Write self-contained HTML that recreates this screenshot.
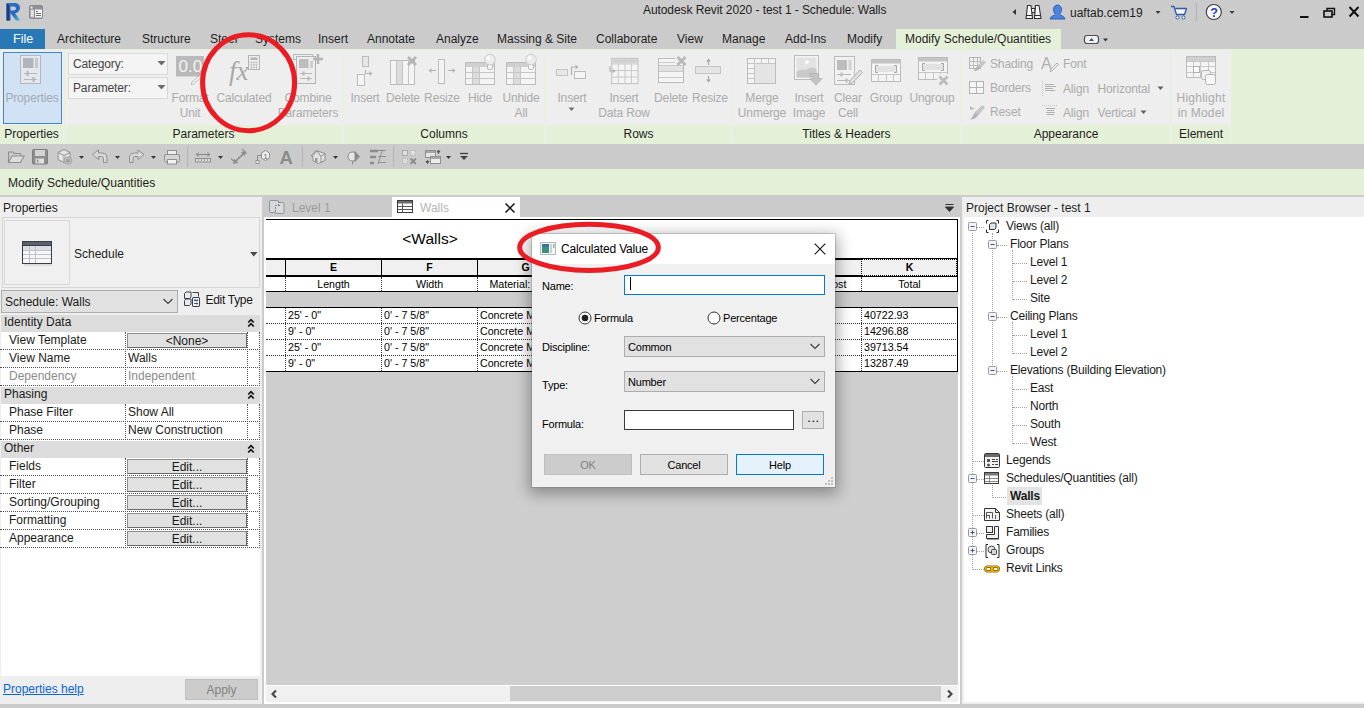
<!DOCTYPE html>
<html>
<head>
<meta charset="utf-8">
<title>Autodesk Revit 2020 - test 1 - Schedule: Walls</title>
<style>
html,body{margin:0;padding:0;}
body{width:1364px;height:708px;overflow:hidden;position:relative;background:#cbcbcb;font-family:"Liberation Sans",sans-serif;font-size:12px;color:#1a1a1a;}
.a{position:absolute;}
.t{position:absolute;white-space:nowrap;line-height:16px;height:16px;}
.c{text-align:center;}
/* title + menu */
#menubar .t{font-size:12px;top:31px;color:#1e1e1e;}
/* ribbon */
#ribbon{left:0;top:47px;width:1364px;height:97px;}
.panel{position:absolute;top:3px;height:93px;background:#eeeeee;}
.plabel{position:absolute;top:78px;height:18px;background:#e5f0d8;font-size:12px;line-height:18px;text-align:center;color:#1e1e1e;}
.rl{position:absolute;white-space:nowrap;letter-spacing:-0.150px;font-size:12px;line-height:16px;color:#ababab;text-align:center;transform:translateX(-50%);}
.rs{position:absolute;white-space:nowrap;letter-spacing:-0.150px;font-size:12px;line-height:15px;color:#ababab;}
/* property palette */
.prow{position:absolute;left:0;width:260px;height:18px;font-size:12px;line-height:17px;}
.phead{position:absolute;left:1px;width:259px;height:17px;background:#dcdcdc;font-size:12px;line-height:15px;}
.pbtn{width:120px;height:15px;background:#e1e1e1;border:1px solid #8e8e8e;border-bottom-color:#6a6a6a;border-right-color:#6a6a6a;box-sizing:border-box;}
/* tree */
.tr{position:absolute;white-space:nowrap;letter-spacing:-0.200px;font-size:12px;line-height:18px;height:18px;color:#1a1a1a;}
/* schedule */
.sc{position:absolute;white-space:nowrap;font-size:10.670px;line-height:14px;color:#000;}
/* dialog */
.dl{position:absolute;white-space:nowrap;letter-spacing:-0.200px;font-size:11px;line-height:14px;color:#000;}
</style>
</head>
<body>

<!-- ===== TITLE BAR ===== -->
<div id="titlebar" class="a" style="left:0;top:0;width:1364px;height:29px;background:#cbcbcb;"></div>
<div class="t" style="left:643px;top:2px;font-size:12px;color:#1e1e1e;letter-spacing:-0.080px;">Autodesk Revit 2020 - test 1 - Schedule: Walls</div>
<div class="t" style="left:1070px;top:5px;font-size:12px;color:#1e1e1e;">uaftab.cem19</div>

<!-- titlebar icons -->
<svg class="a" style="left:0;top:0;" width="1364" height="29" viewBox="0 0 1364 29">
  <defs>
    <linearGradient id="rg" x1="0" y1="0" x2="1" y2="1"><stop offset="0" stop-color="#2a78d0"/><stop offset="0.600" stop-color="#2468c0"/><stop offset="1" stop-color="#5cc4ec"/></linearGradient>
  </defs>
  <!-- R logo -->
  <path d="M6.500 3h7.500c4 0 6 2 6 5s-2 4.800 -5 5.200l5.500 7.300h-4.500l-5.500 -7.500v7.500h-4z M10.500 6.500v4h3c1.500 0 2.500 -0.700 2.500 -2s-1 -2 -2.500 -2z" fill="url(#rg)" fill-rule="evenodd"/>
  <path d="M6.500 3.500l3 2v15h-3z" fill="#1e3c7a"/>
  <!-- qat toggle -->
  <rect x="29.500" y="5.500" width="13" height="13" rx="1.200" fill="#8e9096" stroke="#85878c"/>
  <rect x="30.500" y="6.500" width="2" height="2" fill="#e6f0fa"/>
  <rect x="30.500" y="9.500" width="3.500" height="8" fill="#cfd0d4"/>
  <rect x="35" y="9.500" width="7" height="8" fill="#f2f2f2"/>
  <path d="M31 11.500h2M31 13.500h2M31 15.500h2" stroke="#f4f4f4"/>
  <path d="M36 11.500h2M36 13.500h5M36 15.500h5" stroke="#707070"/>
  <!-- right side -->
  <path d="M1016 9l-3.500 3l3.500 3z" fill="#333"/>
  <g stroke="#2e2e2e" stroke-width="1.100" fill="#f8f8f8" stroke-linejoin="round">
    <rect x="1031" y="8.500" width="4" height="4"/>
    <path d="M1027.500 5.500h3.500l1.500 13h-6.500z"/>
    <path d="M1035.500 5.500h3.500l2 13h-6.500z"/>
    <path d="M1026 15.500h6.500M1034.500 15.500h6.500"/>
  </g>
  <path d="M1057.500 5c2.600 0 4 2 4 4.500c0 2 -0.800 3.500 -2 4.500c0.500 1.500 5 2 5.500 5h-15c0.500 -3 5 -3.500 5.500 -5c-1.200 -1 -2 -2.500 -2 -4.500c0 -2.500 1.400 -4.500 4 -4.500z" fill="#4a86de" stroke="#2a56b0" stroke-width="0.900"/>
  <path d="M1155.5 11.0h5l-2.500 3z" fill="#3a3a3a"/>
  <path d="M1171 6.500h3l2.500 8h8l2 -6h-11" fill="#f4f6fa" stroke="#2c5aa8" stroke-width="1.300" stroke-linejoin="round"/>
  <circle cx="1177.500" cy="17.500" r="1.600" fill="#fff" stroke="#2c5aa8"/>
  <circle cx="1183.500" cy="17.500" r="1.600" fill="#fff" stroke="#2c5aa8"/>
  <path d="M1196.500 3v18" stroke="#b2b2b2"/>
  <circle cx="1213.800" cy="12" r="7.500" fill="#fbfbfb" stroke="#3a3a3a" stroke-width="1.100"/>
  <text x="1210.300" y="16.500" font-family="Liberation Sans" font-weight="bold" font-size="12.500" fill="#2040c0">?</text>
  <path d="M1229.5 11.0h5l-2.500 3z" fill="#3a3a3a"/>
  <path d="M1300 17h8.500" stroke="#111" stroke-width="2"/>
  <path d="M1327 11v-2.500h7.500v6h-2.500" fill="none" stroke="#111" stroke-width="1.400"/>
  <rect x="1324" y="11" width="8" height="6" fill="none" stroke="#111" stroke-width="1.600"/>
  <path d="M1349.500 7l9 9.500M1358.500 7l-9 9.500" stroke="#111" stroke-width="2"/>
  <!-- ribbon minimize toggle in tab row -->
</svg>
<svg class="a" style="left:1082px;top:32px;z-index:2;" width="30" height="14" viewBox="0 0 30 14">
  <rect x="2.500" y="3.500" width="14" height="8" rx="2.500" fill="#eef0f4" stroke="#4a4e58" stroke-width="1.200"/>
  <path d="M7 9l2.500 -3l2.500 3z" fill="#4a4e58"/>
  <path d="M21 6.500h5l-2.500 3z" fill="#333"/>
</svg>

<!-- ===== MENU BAR ===== -->
<div id="menubar" class="a" style="left:0;top:29px;width:1364px;height:20px;">
  <div class="a" style="left:0;top:0;width:45px;height:20px;background:#2878b6;"></div>
  <div class="t" style="left:13px;top:2px;color:#fff;font-size:12.500px;">File</div>
  <div class="a" style="left:896px;top:0;width:165px;height:20px;background:#e5f0d8;"></div>
  <div class="t" style="left:57px;top:2px;">Architecture</div>
  <div class="t" style="left:142px;top:2px;">Structure</div>
  <div class="t" style="left:210px;top:2px;">Steel</div>
  <div class="t" style="left:255px;top:2px;">Systems</div>
  <div class="t" style="left:318px;top:2px;">Insert</div>
  <div class="t" style="left:367px;top:2px;">Annotate</div>
  <div class="t" style="left:436px;top:2px;">Analyze</div>
  <div class="t" style="left:497px;top:2px;">Massing &amp; Site</div>
  <div class="t" style="left:596px;top:2px;">Collaborate</div>
  <div class="t" style="left:677px;top:2px;">View</div>
  <div class="t" style="left:722px;top:2px;">Manage</div>
  <div class="t" style="left:785px;top:2px;">Add-Ins</div>
  <div class="t" style="left:847px;top:2px;">Modify</div>
  <div class="t" style="left:905px;top:2px;">Modify Schedule/Quantities</div>
</div>

<!-- ===== RIBBON ===== -->
<div id="ribbon" class="a">
  <div class="a" style="left:0;top:2px;width:1364px;height:95px;background:#e5f0d8;"></div>
  <div class="panel" style="left:0px;width:64px;"></div>
  <div class="panel" style="left:65px;width:277px;"></div>
  <div class="panel" style="left:343px;width:202px;"></div>
  <div class="panel" style="left:546px;width:185px;"></div>
  <div class="panel" style="left:732px;width:229px;"></div>
  <div class="panel" style="left:962px;width:208px;"></div>
  <div class="panel" style="left:1171px;width:60px;"></div>

  <!-- Properties button -->
  <div class="a" style="left:3px;top:5px;width:59px;height:72px;background:#d0e2f4;border:1px solid #3f88d6;box-sizing:border-box;"></div>
  <svg class="a" style="left:19px;top:7px;" width="23" height="32" viewBox="0 0 23 32">
    <rect x="1.5" y="1.5" width="20" height="28" fill="#e4e8ee" stroke="#b4b8be"/>
    <rect x="4" y="4" width="10.5" height="10" fill="#b0b5bc"/>
    <rect x="16" y="4" width="3" height="10" fill="#c4c8ce"/>
    <path d="M5 19.5h13M5 25.500h13" stroke="#b0b5bc" stroke-width="1"/>
    <path d="M8.500 17v5M14.500 23v5" stroke="#b0b5bc" stroke-width="2"/>
  </svg>
  <div class="rl" style="left:32px;top:43px;color:#a6abb3;">Properties</div>

  <!-- combos -->
  <div class="a" style="left:68px;top:6px;width:100px;height:22px;background:#f4f4f4;border:1px solid #dadada;box-sizing:border-box;"></div>
  <div class="a" style="left:68px;top:30px;width:100px;height:22px;background:#f4f4f4;border:1px solid #dadada;box-sizing:border-box;"></div>
  <div class="rs" style="left:73px;top:10px;color:#454545;">Category:</div>
  <div class="rs" style="left:73px;top:34px;color:#454545;">Parameter:</div>
  <svg class="a" style="left:157px;top:14px;" width="9" height="5"><path d="M0.500 0h8l-4 4.500z" fill="#6a6a6a"/></svg>
  <svg class="a" style="left:157px;top:38px;" width="9" height="5"><path d="M0.500 0h8l-4 4.500z" fill="#6a6a6a"/></svg>

  <!-- Format Unit -->
  <svg class="a" style="left:175px;top:8px;" width="32" height="32" viewBox="0 0 32 32">
    <rect x="1" y="1" width="28" height="20.500" fill="#b9b9b9"/>
    <text x="3.500" y="17" font-family="Liberation Sans" font-size="17" fill="#f2f2f2">0.0</text>
    <path d="M29 17 L17 27 L16 29.500 L18.500 29 L30.500 19z" fill="#f4f4f4" stroke="#bdbdbd" stroke-width="1"/>
  </svg>
  <div class="rl" style="left:190px;top:43px;">Format</div>
  <div class="rl" style="left:190px;top:58px;">Unit</div>

  <!-- Calculated -->
  <svg class="a" style="left:228px;top:6px;" width="34" height="34" viewBox="0 0 34 34">
    <text x="1" y="27" font-family="Liberation Serif" font-style="italic" font-size="27" fill="#a9a9a9">fx</text>
    <rect x="20.500" y="2.500" width="11" height="14" fill="#ededed" stroke="#b4b4b4"/>
    <rect x="22.500" y="4.500" width="7" height="2.500" fill="#b4b4b4"/>
    <path d="M22.500 9.500h7M22.500 12h7M22.500 14.500h7" stroke="#b4b4b4" stroke-width="1.300" stroke-dasharray="1.600 1"/>
  </svg>
  <div class="rl" style="left:244px;top:43px;">Calculated</div>

  <!-- Combine Parameters -->
  <svg class="a" style="left:292px;top:6px;" width="34" height="34" viewBox="0 0 34 34">
    <rect x="1.500" y="1.500" width="19" height="5" fill="#eee" stroke="#b9b9b9"/>
    <rect x="4.500" y="3.500" width="19" height="27" fill="#ededed" stroke="#b4b4b4"/>
    <rect x="7" y="6" width="9.500" height="9" fill="#bdbdbd"/>
    <rect x="18" y="8" width="3" height="7" fill="#cfcfcf"/>
    <path d="M8 20.500h12M8 25.500h12" stroke="#b9b9b9"/>
    <path d="M11.500 18.500v4M16.500 23.500v4" stroke="#b9b9b9" stroke-width="2"/>
    <path d="M26 1v10M21 6h10" stroke="#b4b4b4" stroke-width="2.400"/>
  </svg>
  <div class="rl" style="left:308px;top:43px;">Combine</div>
  <div class="rl" style="left:308px;top:58px;">Parameters</div>

  <!-- Columns -->
  <svg class="a" style="left:354px;top:8px;" width="24" height="32" viewBox="0 0 24 32">
    <rect x="8.500" y="1.500" width="6" height="10" fill="#e6e6e6" stroke="#bcbcbc"/>
    <rect x="3.500" y="19.500" width="7" height="11" fill="#f4f4f4" stroke="#bcbcbc"/>
    <path d="M11.500 15v3.500h5" stroke="#b4b4b4" stroke-width="1.200" fill="none"/>
    <path d="M15.500 16l3 2.500l-3 2.500z" fill="#b4b4b4"/>
  </svg>
  <div class="rl" style="left:365px;top:43px;">Insert</div>
  <svg class="a" style="left:388px;top:8px;" width="32" height="32" viewBox="0 0 32 32">
    <rect x="2.500" y="5.500" width="24" height="24" fill="#f4f4f4" stroke="#bcbcbc"/>
    <rect x="8" y="6" width="6" height="23" fill="#dcdcdc"/>
    <path d="M8.500 6v23M14.500 6v23M20.500 6v23" stroke="#c4c4c4"/>
    <path d="M20 2l8 8M28 2l-8 8" stroke="#b4b4b4" stroke-width="2.600"/>
  </svg>
  <div class="rl" style="left:403px;top:43px;">Delete</div>
  <svg class="a" style="left:427px;top:6px;" width="32" height="32" viewBox="0 0 32 32">
    <rect x="11.500" y="6.500" width="6" height="24" fill="#f4f4f4" stroke="#bcbcbc"/>
    <path d="M2 17.500h7M21 17.500h7" stroke="#b4b4b4" stroke-width="1.200"/>
    <path d="M4.500 15l-3 2.500l3 2.500zM25.500 15l3 2.500l-3 2.500z" fill="#b4b4b4"/>
  </svg>
  <div class="rl" style="left:442px;top:43px;">Resize</div>
  <svg class="a" style="left:464px;top:5px;" width="34" height="34" viewBox="0 0 34 34">
    <rect x="1.500" y="10.500" width="29" height="22" fill="#f4f4f4" stroke="#bcbcbc"/>
    <rect x="2" y="11" width="28" height="4" fill="#cfcfcf"/>
    <rect x="8" y="15" width="7" height="17" fill="#dcdcdc"/>
    <path d="M8.500 15v17M15.500 15v17M2 20.500h28M2 26.500h28" stroke="#c6c6c6"/>
    <rect x="23.500" y="11.500" width="5" height="6" rx="1.500" fill="#f4f4f4" stroke="#bcbcbc"/>
    <circle cx="26" cy="7.500" r="5.300" fill="#ececec" stroke="#cdcdcd"/>
    <circle cx="24.500" cy="6" r="2" fill="#fafafa"/>
  </svg>
  <div class="rl" style="left:480px;top:43px;">Hide</div>
  <svg class="a" style="left:505px;top:5px;" width="34" height="34" viewBox="0 0 34 34">
    <rect x="1.500" y="10.500" width="29" height="22" fill="#f4f4f4" stroke="#bcbcbc"/>
    <rect x="2" y="11" width="28" height="4" fill="#cfcfcf"/>
    <rect x="8" y="15" width="7" height="17" fill="#dcdcdc"/>
    <path d="M8.500 15v17M15.500 15v17M2 20.500h28M2 26.500h28" stroke="#c6c6c6"/>
    <rect x="23.500" y="11.500" width="5" height="6" rx="1.500" fill="#f4f4f4" stroke="#bcbcbc"/>
    <circle cx="26" cy="7.500" r="5.300" fill="#ececec" stroke="#cdcdcd"/>
    <circle cx="24.500" cy="6" r="2" fill="#fafafa"/>
  </svg>
  <div class="rl" style="left:521px;top:43px;">Unhide</div>
  <div class="rl" style="left:521px;top:58px;">All</div>

  <!-- Rows -->
  <svg class="a" style="left:555px;top:8px;" width="34" height="32" viewBox="0 0 34 32">
    <rect x="1.500" y="14.500" width="11" height="6" fill="#e6e6e6" stroke="#c4c4c4"/>
    <rect x="19.500" y="16.500" width="11" height="7" fill="#f4f4f4" stroke="#bcbcbc"/>
    <path d="M16.500 20v-8h5" stroke="#b4b4b4" stroke-width="1.200" fill="none"/>
    <path d="M20.500 9.500l3 2.500l-3 2.500z" fill="#b4b4b4"/>
  </svg>
  <div class="rl" style="left:572px;top:43px;">Insert</div>
  <svg class="a" style="left:568px;top:60px;" width="8" height="5"><path d="M0.500 0.500h6l-3 3.500z" fill="#707070"/></svg>
  <svg class="a" style="left:606px;top:9px;" width="35" height="30" viewBox="0 0 36 32">
    <rect x="5.500" y="2.500" width="28" height="27" fill="#f4f4f4" stroke="#bcbcbc"/>
    <rect x="6" y="3" width="27" height="5" fill="#d6d6d6"/>
    <path d="M6 5.500h27M6 8.500h27M6 15.500h27M6 22.500h27M12.500 8v21M19.500 8v21M26.500 8v21" stroke="#c8c8c8"/>
    <path d="M3.500 11v5h4" stroke="#b0b0b0" stroke-width="1.200" fill="none"/>
    <path d="M6.500 13.500l3 2.500l-3 2.500z" fill="#b0b0b0"/>
  </svg>
  <div class="rl" style="left:624px;top:43px;">Insert</div>
  <div class="rl" style="left:624px;top:58px;">Data Row</div>
  <svg class="a" style="left:656px;top:8px;" width="32" height="32" viewBox="0 0 32 32">
    <rect x="2.500" y="3.500" width="25" height="24" fill="#f4f4f4" stroke="#bcbcbc"/>
    <rect x="3" y="11" width="24" height="5" fill="#e2e2e2"/>
    <path d="M3 7.500h24M3 10.500h24M3 16.500h24M3 22.500h24" stroke="#c8c8c8"/>
    <rect x="19" y="0" width="12" height="9" fill="#eeeeee"/>
    <path d="M21.500 2l8 8M29.500 2l-8 8" stroke="#b9b9b9" stroke-width="2.800"/>
  </svg>
  <div class="rl" style="left:671px;top:43px;">Delete</div>
  <svg class="a" style="left:694px;top:8px;" width="32" height="32" viewBox="0 0 32 32">
    <rect x="1.500" y="11.500" width="25" height="7" fill="#e4e4e4" stroke="#c4c4c4"/>
    <path d="M14.500 5v5M14.500 21v5" stroke="#a8a8a8" stroke-width="1.200"/>
    <path d="M12 6.500l2.500 -3l2.500 3zM12 24.500l2.500 3l2.500 -3z" fill="#a8a8a8"/>
  </svg>
  <div class="rl" style="left:710px;top:43px;">Resize</div>

  <!-- Titles & Headers -->
  <svg class="a" style="left:746px;top:6px;" width="32" height="34" viewBox="0 0 32 34">
    <rect x="1.500" y="5.500" width="28" height="25" fill="#f4f4f4" stroke="#bcbcbc"/>
    <rect x="8" y="11" width="21" height="19" fill="#e4e4e4"/>
    <path d="M2 10.500h27M8.500 6v24M15.500 6v5M22.500 6v5M2 15.500h6M2 20.500h6M2 25.500h6" stroke="#c6c6c6"/>
  </svg>
  <div class="rl" style="left:762px;top:43px;">Merge</div>
  <div class="rl" style="left:762px;top:58px;">Unmerge</div>
  <svg class="a" style="left:793px;top:6px;" width="34" height="34" viewBox="0 0 34 34">
    <rect x="1.500" y="2.500" width="24" height="24" fill="#f4f4f4" stroke="#bcbcbc"/>
    <rect x="3.500" y="4.500" width="20" height="20" fill="#e2e2e2"/>
    <circle cx="14" cy="9" r="2" fill="#fafafa"/>
    <path d="M3.500 19c5 -4 8 -1 11 -3s6 -2 9 0v8.500h-20z" fill="#c9c9c9"/>
    <path d="M17 20.500h8.500v5h3.500l-6 6.500l-6 -6.500h3.500v-2h-3.500z" fill="#c4c4c4" stroke="#b0b0b0" stroke-width="0.800"/>
  </svg>
  <div class="rl" style="left:809px;top:43px;">Insert</div>
  <div class="rl" style="left:809px;top:58px;">Image</div>
  <svg class="a" style="left:833px;top:6px;" width="32" height="34" viewBox="0 0 32 34">
    <rect x="1.500" y="3.500" width="20" height="28" fill="#f1f1f1" stroke="#bcbcbc"/>
    <rect x="4" y="7" width="10" height="10" fill="#bdbdbd"/>
    <rect x="15.500" y="7" width="3" height="10" fill="#d2d2d2"/>
    <path d="M4 21.500h14M4 27.500h14" stroke="#b9b9b9"/>
    <path d="M8.500 19.500v4M13.500 25.500v4" stroke="#b9b9b9" stroke-width="2"/>
    <path d="M27 17l2.500 2.500l-10 10.500l-3.500 1l1 -3.500z" fill="#e0e0e0" stroke="#b0b0b0" stroke-width="1"/>
  </svg>
  <div class="rl" style="left:848px;top:43px;">Clear</div>
  <div class="rl" style="left:848px;top:58px;">Cell</div>
  <svg class="a" style="left:870px;top:8px;" width="32" height="32" viewBox="0 0 32 32">
    <rect x="1.500" y="4.500" width="29" height="22" fill="#f4f4f4" stroke="#bcbcbc"/>
    <rect x="2" y="5" width="28" height="3.500" fill="#c4c4c4"/>
    <rect x="6" y="11" width="20" height="6" fill="#e2e2e2"/><path d="M8 10.500h-2.500v7h2.500M24 10.500h2.500v7h-2.500" fill="none" stroke="#a8a8a8"/>
    <path d="M2 19.500h28M8.500 20v6M16.500 20v6M23.500 20v6" stroke="#c6c6c6"/>
  </svg>
  <div class="rl" style="left:886px;top:43px;">Group</div>
  <svg class="a" style="left:917px;top:6px;" width="36" height="34" viewBox="0 0 36 34">
    <rect x="1.500" y="4.500" width="29" height="22" fill="#f4f4f4" stroke="#bcbcbc"/>
    <rect x="2" y="5" width="28" height="3.500" fill="#c4c4c4"/>
    <rect x="6" y="11" width="20" height="6" fill="#e2e2e2"/><path d="M8 10.500h-2.500v7h2.500M24 10.500h2.500v7h-2.500" fill="none" stroke="#a8a8a8"/>
    <path d="M2 19.500h28M8.500 20v6M16.500 20v6M23.500 20v6" stroke="#c6c6c6"/>
    <rect x="20" y="21" width="13" height="12" fill="#eeeeee"/><path d="M22.500 23.500l8 8M30.500 23.500l-8 8" stroke="#bcbcbc" stroke-width="2.800"/>
  </svg>
  <div class="rl" style="left:932px;top:43px;">Ungroup</div>

  <!-- Appearance -->
  <svg class="a" style="left:968px;top:9px;" width="18" height="18" viewBox="0 0 18 18">
    <rect x="1.500" y="1.500" width="11" height="11" fill="#f0f0f0" stroke="#b4b4b4"/>
    <path d="M5.500 2v10M9.500 2v10M2 5.500h10M2 9.500h10" stroke="#bcbcbc"/>
    <path d="M15.500 4.500l1.800 1.800l-5 5.500l-2.500 -2z" fill="#c8c8c8" stroke="#b4b4b4" stroke-width="0.600"/><path d="M9.800 9.800l2.500 2c-1.500 3 -4.500 3.500 -7 3.200c2 -1 2.500 -3.500 4.500 -5.200z" fill="#b4b4b4"/>
  </svg>
  <div class="rs" style="left:990px;top:10px;">Shading</div>
  <svg class="a" style="left:968px;top:33px;" width="18" height="18" viewBox="0 0 18 18">
    <rect x="1.500" y="1.500" width="14" height="12" fill="#f4f4f4" stroke="#b4b4b4"/>
    <path d="M8.500 2v11M2 7.500h13" stroke="#b4b4b4"/>
  </svg>
  <div class="rs" style="left:990px;top:34px;">Borders</div>
  <svg class="a" style="left:968px;top:57px;" width="18" height="18" viewBox="0 0 18 18">
    <path d="M14.500 1.500l2 2l-6.500 7.500l-3 -2.500z" fill="#c6c6c6" stroke="#b4b4b4" stroke-width="0.600"/><path d="M7 8.500l3 2.500c-1.500 3.500 -5 4.500 -8 4.500c2.500 -1.500 3 -5 5 -7z" fill="#b4b4b4"/>
    <path d="M6.500 5c-1 -1.500 -2.500 -1.500 -3.500 -0.500M2.500 2.500v2.500h2.500" stroke="#adadad" fill="none"/>
  </svg>
  <div class="rs" style="left:990px;top:58px;">Reset</div>

  <svg class="a" style="left:1041px;top:8px;" width="20" height="20" viewBox="0 0 20 20">
    <text x="0" y="14" font-family="Liberation Sans" font-size="16" fill="#b0b0b0">A</text>
    <path d="M16 8l1.500 1.500l-6 6l-2.500 1l1 -2.500z" fill="#eee" stroke="#b0b0b0" stroke-width="1"/>
  </svg>
  <div class="rs" style="left:1063px;top:10px;">Font</div>
  <svg class="a" style="left:1041px;top:33px;" width="20" height="20" viewBox="0 0 20 20">
    <path d="M1.500 1v16" stroke="#c4c4c4" stroke-dasharray="1 1"/>
    <path d="M4 4.500h9M4 6.500h11M4 8.500h8M4 10.500h10" stroke="#b0b0b0"/>
  </svg>
  <div class="rs" style="left:1063px;top:35px;">Align</div><div class="rs" style="left:1097.500px;top:35px;">Horizontal</div>
  <svg class="a" style="left:1157px;top:39px;" width="7" height="5"><path d="M0.500 0.500h6l-3 3.500z" fill="#5f5f5f"/></svg>
  <svg class="a" style="left:1041px;top:57px;" width="20" height="20" viewBox="0 0 20 20">
    <path d="M1 1.500h16" stroke="#c4c4c4" stroke-dasharray="1 1"/>
    <path d="M5 4.500h9M6 6.500h7M5 8.500h9M6 10.500h7" stroke="#b0b0b0"/>
  </svg>
  <div class="rs" style="left:1063px;top:59px;">Align</div><div class="rs" style="left:1097.500px;top:59px;">Vertical</div>
  <svg class="a" style="left:1140px;top:63px;" width="7" height="5"><path d="M0.500 0.500h6l-3 3.500z" fill="#5f5f5f"/></svg>

  <!-- Element -->
  <svg class="a" style="left:1185px;top:6px;" width="34" height="34" viewBox="0 0 34 34">
    <rect x="1.500" y="3.500" width="29" height="21" fill="#f4f4f4" stroke="#bcbcbc"/>
    <rect x="2" y="4" width="28" height="4" fill="#cfcfcf"/>
    <path d="M2 8.500h28M2 13.500h28M2 19.500h28M8.500 8v16M15.500 8v16M23.500 8v16" stroke="#c8c8c8"/>
    <rect x="8.500" y="13.500" width="6" height="6" fill="#fafafa" stroke="#b0b0b0"/>
    <rect x="16.500" y="17.500" width="9" height="9" rx="2" fill="#f0f0f0" stroke="#b4b4b4"/>
    <rect x="20.500" y="21.500" width="10" height="10" rx="2" fill="#f6f6f6" stroke="#b4b4b4"/>
  </svg>
  <div class="rl" style="left:1201px;top:43px;letter-spacing:0.250px;">Highlight</div>
  <div class="rl" style="left:1201px;top:58px;letter-spacing:0.150px;">in Model</div>
  <div class="plabel" style="left:0px;width:63px;">Properties</div>
  <div class="plabel" style="left:66px;width:275px;">Parameters</div>
  <div class="plabel" style="left:344px;width:200px;">Columns</div>
  <div class="plabel" style="left:547px;width:183px;">Rows</div>
  <div class="plabel" style="left:733px;width:227px;">Titles &amp; Headers</div>
  <div class="plabel" style="left:963px;width:206px;">Appearance</div>
  <div class="plabel" style="left:1172px;width:58px;">Element</div>
</div>

<!-- ===== QAT ===== -->
<div id="qat" class="a" style="left:0;top:144px;width:1364px;height:25px;background:#cbcbcb;">
<svg class="a" style="left:0;top:0;" width="480" height="25" viewBox="0 0 480 25">
  <!-- open -->
  <path d="M8.500 18.500v-10.500h4.500l1.500 1.500h6v2.500" fill="none" stroke="#8f8f8f" stroke-width="1.100"/>
  <path d="M8.500 18.500l3.500 -6.500h12l-3.500 6.500z" fill="#dcdcdc" stroke="#8f8f8f" stroke-width="1.100"/>
  <!-- save -->
  <rect x="32.500" y="5.500" width="15" height="14.500" rx="1" fill="#8c8c8c" stroke="#7e7e7e"/>
  <rect x="35" y="6" width="10" height="6" fill="#d4d4d4"/>
  <rect x="35.500" y="14.500" width="8.500" height="5" fill="#e0e0e0"/>
  <rect x="37" y="15.500" width="1.500" height="3" fill="#8c8c8c"/>
  <!-- 3d sync -->
  <path d="M64 5.500l6 3v7l-6 3l-6 -3v-7z" fill="#e4e4e4" stroke="#8f8f8f"/>
  <path d="M58 8.500l6 3l6 -3M64 11.500v7" fill="none" stroke="#8f8f8f"/>
  <circle cx="68" cy="16.500" r="3.800" fill="#bdbdbd" stroke="#a0a0a0" stroke-width="0.800"/>
  <path d="M66 16h4M66 17.500h4" stroke="#8a8a8a" stroke-width="0.800"/>
  <path d="M79.0 12.0h5l-2.500 3z" fill="#3a3a3a"/>
  <!-- undo -->
  <path d="M92.500 10.500l6 -4.500v3h3.500c3.500 0 5 2 5 5v4.500h-3.500v-4c0 -1.500 -0.800 -2 -2 -2h-3v3z" fill="#d8d8d8" stroke="#8f8f8f" stroke-width="1" stroke-linejoin="round"/>
  <path d="M115.0 12.0h5l-2.500 3z" fill="#3a3a3a"/>
  <!-- redo -->
  <path d="M144 10.500l-6 -4.500v3h-3.500c-3.500 0 -5 2 -5 5v4.500h3.500v-4c0 -1.500 0.800 -2 2 -2h3v3z" fill="#d8d8d8" stroke="#8f8f8f" stroke-width="1" stroke-linejoin="round"/>
  <path d="M151.0 12.0h5l-2.500 3z" fill="#3a3a3a"/>
  <!-- print -->
  <rect x="167.500" y="6.500" width="9" height="5" fill="#ececec" stroke="#8f8f8f"/>
  <rect x="164.500" y="10.500" width="15" height="7.500" rx="1.500" fill="#d4d4d4" stroke="#8f8f8f"/>
  <rect x="167.500" y="15.500" width="9" height="4.500" fill="#f2f2f2" stroke="#8f8f8f"/>
  <path d="M187.500 2v21" stroke="#b4b4b4"/>
  <!-- measure -->
  <path d="M197 10.500h12" stroke="#8f8f8f" stroke-width="1.200"/>
  <path d="M198.500 8l-3 2.500l3 2.500zM207.500 8l3 2.500l-3 2.500z" fill="#8f8f8f"/>
  <rect x="195.500" y="14.500" width="15" height="3.500" fill="#dcdcdc" stroke="#8f8f8f"/>
  <path d="M198.500 15v2M201.500 15v2M204.500 15v2M207.500 15v2" stroke="#8f8f8f" stroke-width="0.800"/>
  <path d="M218.0 12.0h5l-2.500 3z" fill="#3a3a3a"/>
  <!-- aligned dim -->
  <path d="M235 18l9 -9" stroke="#8c8c8c" stroke-width="1.600"/>
  <path d="M233 20l1.200 -5.200l4 4zM246 7l-1.200 5.200l-4 -4z" fill="#8c8c8c"/>
  <path d="M231 14.500l4.500 4.500M242 5l4.500 4.500" stroke="#8f8f8f" stroke-width="1.100"/>
  <!-- tag -->
  <path d="M265.500 6.500l4 2.500v5l-4 2.500l-4 -2.500v-5z" fill="#ececec" stroke="#8f8f8f"/>
  <text x="263.500" y="14.500" font-family="Liberation Sans" font-size="7.500" fill="#6a6a6a">1</text>
  <path d="M261.500 11.500h-4v5" fill="none" stroke="#8f8f8f"/>
  <rect x="256" y="16.500" width="3" height="3" fill="#ececec" stroke="#8f8f8f" stroke-width="0.900"/>
  <!-- A -->
  <text x="279.500" y="19.500" font-family="Liberation Sans" font-weight="bold" font-size="18.500" fill="#8c8c8c">A</text>
  <path d="M302.500 2v21" stroke="#b4b4b4"/>
  <!-- house -->
  <path d="M311 12l5 -5.500l9 3l0 7l-6.500 3l-5.500 -2.500v-5z" fill="#e2e2e2" stroke="#8f8f8f" stroke-linejoin="round"/>
  <path d="M313 11.500l4 -4.500l4 5.500v6.500M325 9.500l-4 3" fill="none" stroke="#8f8f8f"/>
  <rect x="315" y="14" width="2.500" height="4" fill="#9a9a9a"/>
  <path d="M333.0 12.0h5l-2.500 3z" fill="#3a3a3a"/>
  <!-- section -->
  <circle cx="352.500" cy="12.500" r="4.500" fill="#e6e6e6" stroke="#8f8f8f" stroke-width="1.100"/>
  <path d="M354.500 6.500l5.500 6l-5.500 6z" fill="#8c8c8c"/>
  <path d="M352.500 17v3.500" stroke="#8f8f8f"/>
  <!-- thin lines -->
  <path d="M370 7h8M370 13h6M370 19h4" stroke="#8c8c8c" stroke-width="2.600"/>
  <path d="M378 6.500h8M378 12.500h8M378 18.500h8" stroke="#8f8f8f" stroke-width="1"/>
  <path d="M382.500 5.500l-4.500 14.500" stroke="#8f8f8f" stroke-width="1"/>
  <path d="M393.500 2v21" stroke="#b4b4b4"/>
  <!-- close hidden -->
  <rect x="402.500" y="6.500" width="5" height="5" fill="#dedede" stroke="#aaaaaa"/>
  <rect x="410.500" y="6.500" width="5" height="5" fill="#dedede" stroke="#b4b4b4" stroke-dasharray="1.500 1"/>
  <rect x="402.500" y="14.500" width="5" height="5" fill="#dedede" stroke="#b4b4b4" stroke-dasharray="1.500 1"/>
  <path d="M410.500 14.500l5.500 5.500M416 14.500l-5.500 5.500" stroke="#8c8c8c" stroke-width="1.800"/>
  <!-- switch windows -->
  <rect x="425.500" y="6.500" width="10" height="7" fill="#e4e4e4" stroke="#8f8f8f"/>
  <path d="M425.500 8h10" stroke="#8f8f8f" stroke-width="1.500"/>
  <rect x="430.500" y="12.500" width="10" height="7" fill="#ececec" stroke="#8f8f8f"/>
  <path d="M430.500 14h10" stroke="#8f8f8f" stroke-width="1.500"/>
  <path d="M438.500 10v-3M437 8l1.500 -2l1.500 2zM427.500 16v3M426 17.500l1.500 2l1.500 -2z" stroke="#555" stroke-width="0.900" fill="#555"/>
  <path d="M446.0 12.0h5l-2.500 3z" fill="#3a3a3a"/>
  <!-- customize -->
  <path d="M460 9.500h8" stroke="#444" stroke-width="1.400"/>
  <path d="M460 12h8l-4 4z" fill="#444"/>
</svg>
</div>

<!-- ===== OPTIONS BAR ===== -->
<div id="optbar" class="a" style="left:0;top:169px;width:1364px;height:26px;background:#e5f0d8;"></div>
<div class="t" style="left:8px;top:175px;font-size:12.100px;color:#1e1e1e;">Modify Schedule/Quantities</div>

<!-- ===== WORK AREA BG ===== -->
<div class="a" style="left:0;top:195px;width:1364px;height:513px;background:#cbcbcb;"></div>


<!-- ===== PROPERTIES PALETTE ===== -->
<div class="a" style="left:0;top:197px;width:262px;height:507px;background:#eeeeee;"></div>
<div id="props" class="a" style="left:0;top:198px;width:262px;height:505px;">
  <div class="t" style="left:3px;top:2px;font-size:12px;color:#1e1e1e;">Properties</div>
  <!-- type selector -->
  <div class="a" style="left:2px;top:19px;width:258px;height:71px;background:#f0f0f0;border:1px solid #d6d6d6;box-sizing:border-box;"></div>
  <div class="a" style="left:4px;top:22px;width:66px;height:65px;background:#f0f0f0;border:1px solid #d8d8d8;box-sizing:border-box;"></div>
  <svg class="a" style="left:21px;top:42px;" width="32" height="26" viewBox="0 0 32 26">
    <rect x="1.500" y="1.500" width="29" height="22" fill="#f6f6f6" stroke="#3c3c46"/>
    <rect x="2" y="2" width="28" height="3.500" fill="#5a6070"/>
    <rect x="2" y="5.500" width="28" height="5" fill="#dcdde2"/>
    <path d="M2 10.500h28M2 14.500h28M2 18.500h28M8.500 6v17M14.500 6v17" stroke="#bfc0c8"/>
    <path d="M2 5.500h28" stroke="#3c3c46"/>
    <path d="M3 25h28" stroke="#c8c8c8"/>
  </svg>
  <div class="t" style="left:74px;top:48px;font-size:12px;color:#1e1e1e;">Schedule</div>
  <svg class="a" style="left:250px;top:54px;" width="8" height="5"><path d="M0 0h7.500l-3.750 4.500z" fill="#4a4a4a"/></svg>
  <!-- instance combo -->
  <div class="a" style="left:1px;top:92px;width:177px;height:23px;background:#e1e1e1;border:1px solid #adadad;box-sizing:border-box;"></div>
  <div class="t" style="left:5px;top:96px;font-size:12px;color:#1a1a1a;">Schedule: Walls</div>
  <svg class="a" style="left:163px;top:100px;" width="10" height="7"><path d="M0.500 1l4.500 4.500l4.500 -4.500" stroke="#3c3c3c" fill="none" stroke-width="1.100"/></svg>
  <svg class="a" style="left:183px;top:93px;" width="18" height="18" viewBox="0 0 18 18">
    <path d="M1.500 2.500l1.500 -1.500h5v5l-1.500 1.500h-5z" fill="#e8ecf2" stroke="#3c4048"/>
    <path d="M9.500 1.500h6v4" fill="none" stroke="#3c4048"/>
    <rect x="10.500" y="2.500" width="4" height="3" fill="#e8ecf2"/>
    <path d="M1.500 9.500l1.500 -1.500h5v5l-1.500 1.500h-5z" fill="#e8ecf2" stroke="#3c4048"/>
    <rect x="9.500" y="6.500" width="7" height="9" rx="1.200" fill="#fafafa" stroke="#3c4048" stroke-width="1.100"/>
    <rect x="11" y="8.500" width="4" height="1.600" fill="#2a62b8"/>
    <path d="M11 12.500h3.500M13.500 11.300l1.300 1.200l-1.300 1.200" fill="none" stroke="#3c4048" stroke-width="0.900"/>
  </svg>
  <div class="t" style="left:205.500px;top:94px;font-size:12px;color:#1a1a1a;letter-spacing:-0.300px;">Edit Type</div>

  <!-- table -->
  <div class="a" style="left:1px;top:117px;width:259px;height:361px;background:#fff;"></div>
  <div class="phead" style="top:117px;"><span style="padding-left:3px;">Identity Data</span></div>
  <div class="phead" style="top:189px;"><span style="padding-left:3px;">Phasing</span></div>
  <div class="phead" style="top:243px;"><span style="padding-left:3px;">Other</span></div>
  <svg class="a" style="left:247px;top:120px;" width="8" height="10"><path d="M1.200 4.500l2.800 -2.800l2.800 2.800M1.200 8.500l2.800 -2.800l2.800 2.800" stroke="#111" fill="none" stroke-width="1.700"/></svg>
  <svg class="a" style="left:247px;top:192px;" width="8" height="10"><path d="M1.200 4.500l2.800 -2.800l2.800 2.800M1.200 8.500l2.800 -2.800l2.800 2.800" stroke="#111" fill="none" stroke-width="1.700"/></svg>
  <svg class="a" style="left:247px;top:246px;" width="8" height="10"><path d="M1.200 4.500l2.800 -2.800l2.800 2.800M1.200 8.500l2.800 -2.800l2.800 2.800" stroke="#111" fill="none" stroke-width="1.700"/></svg>

  <!-- grid lines (dotted) -->
  <div class="a" style="left:125px;top:134px;width:0;height:54px;border-left:1px dotted #555;"></div>
  <div class="a" style="left:125px;top:206px;width:0;height:36px;border-left:1px dotted #555;"></div>
  <div class="a" style="left:125px;top:260px;width:0;height:90px;border-left:1px dotted #555;"></div>
  <div class="a" style="left:247px;top:134px;width:0;height:54px;border-left:1px dotted #555;"></div>
  <div class="a" style="left:247px;top:206px;width:0;height:36px;border-left:1px dotted #555;"></div>
  <div class="a" style="left:247px;top:260px;width:0;height:90px;border-left:1px dotted #555;"></div>
  <div class="a" style="left:259px;top:134px;width:0;height:54px;border-left:1px dotted #555;"></div>
  <div class="a" style="left:259px;top:206px;width:0;height:36px;border-left:1px dotted #555;"></div>
  <div class="a" style="left:259px;top:260px;width:0;height:90px;border-left:1px dotted #555;"></div>
  <div class="a" style="left:0;top:151px;width:260px;height:0;border-top:1px dotted #555;"></div>
  <div class="a" style="left:0;top:169px;width:260px;height:0;border-top:1px dotted #555;"></div>
  <div class="a" style="left:0;top:187px;width:260px;height:0;border-top:1px dotted #555;"></div>
  <div class="a" style="left:0;top:223px;width:260px;height:0;border-top:1px dotted #555;"></div>
  <div class="a" style="left:0;top:241px;width:260px;height:0;border-top:1px dotted #555;"></div>
  <div class="a" style="left:0;top:277px;width:260px;height:0;border-top:1px dotted #555;"></div>
  <div class="a" style="left:0;top:295px;width:260px;height:0;border-top:1px dotted #555;"></div>
  <div class="a" style="left:0;top:313px;width:260px;height:0;border-top:1px dotted #555;"></div>
  <div class="a" style="left:0;top:331px;width:260px;height:0;border-top:1px dotted #555;"></div>
  <div class="a" style="left:0;top:349px;width:260px;height:0;border-top:1px dotted #555;"></div>

  <!-- names -->
  <div class="t" style="left:9px;top:134px;">View Template</div>
  <div class="t" style="left:9px;top:152px;">View Name</div>
  <div class="t" style="left:9px;top:170px;color:#8a8a8a;">Dependency</div>
  <div class="t" style="left:9px;top:206px;">Phase Filter</div>
  <div class="t" style="left:9px;top:224px;">Phase</div>
  <div class="t" style="left:9px;top:260px;">Fields</div>
  <div class="t" style="left:9px;top:278px;">Filter</div>
  <div class="t" style="left:9px;top:296px;">Sorting/Grouping</div>
  <div class="t" style="left:9px;top:314px;">Formatting</div>
  <div class="t" style="left:9px;top:332px;">Appearance</div>
  <!-- values -->
  <div class="a pbtn" style="left:127px;top:135px;"></div><div class="t c" style="left:127px;top:135px;width:120px;">&lt;None&gt;</div>
  <div class="t" style="left:128px;top:152px;">Walls</div>
  <div class="t" style="left:128px;top:170px;color:#8a8a8a;">Independent</div>
  <div class="t" style="left:128px;top:206px;">Show All</div>
  <div class="t" style="left:128px;top:224px;">New Construction</div>
  <div class="a pbtn" style="left:127px;top:261px;"></div><div class="t c" style="left:127px;top:261px;width:120px;">Edit...</div>
  <div class="a pbtn" style="left:127px;top:279px;"></div><div class="t c" style="left:127px;top:279px;width:120px;">Edit...</div>
  <div class="a pbtn" style="left:127px;top:297px;"></div><div class="t c" style="left:127px;top:297px;width:120px;">Edit...</div>
  <div class="a pbtn" style="left:127px;top:315px;"></div><div class="t c" style="left:127px;top:315px;width:120px;">Edit...</div>
  <div class="a pbtn" style="left:127px;top:333px;"></div><div class="t c" style="left:127px;top:333px;width:120px;">Edit...</div>

  <!-- footer -->
  <div class="t" style="left:3px;top:483px;color:#0a64d2;text-decoration:underline;">Properties help</div>
  <div class="a" style="left:185px;top:481px;width:73px;height:21px;background:#cccccc;border:1px solid #bfbfbf;box-sizing:border-box;"></div>
  <div class="t c" style="left:185px;top:484px;width:73px;color:#838383;">Apply</div>
</div>


<!-- ===== VIEW AREA ===== -->
<div class="a" style="left:264px;top:217px;width:696px;height:487px;background:#ffffff;"></div>
<div class="a" style="left:266px;top:219px;width:692px;height:466px;background:#cecece;"></div>
<div id="view" class="a" style="left:265px;top:197px;width:693px;height:506px;overflow:hidden;">
  <!-- tab bar -->
  
  <svg class="a" style="left:3px;top:2px;" width="19" height="17" viewBox="0 0 19 17">
    <rect x="1.500" y="1.500" width="9" height="12" rx="1" fill="#d6d8db" stroke="#8e9299"/>
    <path d="M7.500 3.500h7.500a1 1 0 0 1 1 1v9a1 1 0 0 1 -1 1h-7.500z" fill="#d9dbde" stroke="#8e9299"/>
    <path d="M10 3.500h-2.500v10" fill="none" stroke="#d6d8db" stroke-width="1.200"/>
    <path d="M7.500 13v-6.500h5M10.500 2v4" fill="none" stroke="#7e838a" stroke-dasharray="2 1"/>
  </svg>
  <div class="t" style="left:27px;top:3px;color:#9c9c9c;">Level 1</div>
  <div class="a" style="left:127px;top:0;width:128px;height:21px;background:#ffffff;"></div>
  <svg class="a" style="left:132px;top:3px;" width="16" height="14" viewBox="0 0 16 14">
    <rect x="0.500" y="0.500" width="15" height="12" fill="#fff" stroke="#3a3a3a"/>
    <rect x="1" y="1" width="14" height="2.500" fill="#6a6a6a"/>
    <path d="M1 6.500h14M1 9.500h14M5.500 3.500v9" stroke="#5a5a5a"/>
  </svg>
  <div class="t" style="left:155px;top:3px;color:#b4b4b4;">Walls</div>
  <svg class="a" style="left:239px;top:5px;" width="12" height="12"><path d="M1.500 1.500l9 9M10.500 1.500l-9 9" stroke="#111" stroke-width="1.500"/></svg>
  <svg class="a" style="left:680px;top:7px;" width="10" height="8"><path d="M0.500 0.500h8M0.500 3h8l-4 4.500z" stroke="#333" fill="#333" stroke-width="1"/></svg>

  <!-- schedule (coords relative to view: x-265, y-197) -->
  <div class="a" style="left:1px;top:22px;width:692px;height:153px;background:#fff;"></div>
  <div class="a" style="left:1px;top:22px;width:692px;height:1px;background:#000;"></div>
  <div class="a" style="left:692px;top:22px;width:1px;height:73px;background:#000;z-index:1;"></div>
  <div class="a" style="left:692px;top:110px;width:1px;height:65px;background:#000;z-index:1;"></div>
  <div class="a" style="left:1px;top:63px;width:692px;height:15px;background:#f0f0f0;"></div>
  <div class="a" style="left:1px;top:61px;width:692px;height:2px;background:#000;"></div>
  <div class="a" style="left:1px;top:78px;width:692px;height:2px;background:#000;"></div>
  <div class="a" style="left:1px;top:94px;width:692px;height:1px;background:#000;"></div>
  <div class="a" style="left:1px;top:95px;width:692px;height:15px;background:#cecece;"></div>
  <div class="a" style="left:1px;top:110px;width:692px;height:1px;background:#000;"></div>
  <div class="a" style="left:1px;top:126px;width:692px;height:0;border-top:1px dotted #333;"></div>
  <div class="a" style="left:1px;top:142px;width:692px;height:0;border-top:1px dotted #333;"></div>
  <div class="a" style="left:1px;top:158px;width:692px;height:0;border-top:1px dotted #333;"></div>
  <div class="a" style="left:1px;top:174px;width:692px;height:1px;background:#000;"></div>
  <div class="a" style="left:20px;top:63px;width:1px;height:15px;background:#000;"></div>
  <div class="a" style="left:20px;top:80px;width:0;height:14px;border-left:1px dotted #333;"></div>
  <div class="a" style="left:20px;top:111px;width:0;height:63px;border-left:1px dotted #333;"></div>
  <div class="a" style="left:116px;top:63px;width:1px;height:15px;background:#000;"></div>
  <div class="a" style="left:116px;top:80px;width:0;height:14px;border-left:1px dotted #333;"></div>
  <div class="a" style="left:116px;top:111px;width:0;height:63px;border-left:1px dotted #333;"></div>
  <div class="a" style="left:212px;top:63px;width:1px;height:15px;background:#000;"></div>
  <div class="a" style="left:212px;top:80px;width:0;height:14px;border-left:1px dotted #333;"></div>
  <div class="a" style="left:212px;top:111px;width:0;height:63px;border-left:1px dotted #333;"></div>
  <div class="a" style="left:308px;top:63px;width:1px;height:15px;background:#000;"></div>
  <div class="a" style="left:308px;top:80px;width:0;height:14px;border-left:1px dotted #333;"></div>
  <div class="a" style="left:308px;top:111px;width:0;height:63px;border-left:1px dotted #333;"></div>
  <div class="a" style="left:404px;top:63px;width:1px;height:15px;background:#000;"></div>
  <div class="a" style="left:404px;top:80px;width:0;height:14px;border-left:1px dotted #333;"></div>
  <div class="a" style="left:404px;top:111px;width:0;height:63px;border-left:1px dotted #333;"></div>
  <div class="a" style="left:500px;top:63px;width:1px;height:15px;background:#000;"></div>
  <div class="a" style="left:500px;top:80px;width:0;height:14px;border-left:1px dotted #333;"></div>
  <div class="a" style="left:500px;top:111px;width:0;height:63px;border-left:1px dotted #333;"></div>
  <div class="a" style="left:596px;top:63px;width:1px;height:15px;background:#000;"></div>
  <div class="a" style="left:596px;top:80px;width:0;height:14px;border-left:1px dotted #333;"></div>
  <div class="a" style="left:596px;top:111px;width:0;height:63px;border-left:1px dotted #333;"></div>
  <div class="a" style="left:692px;top:63px;width:1px;height:15px;background:#000;"></div>
  <div class="a" style="left:692px;top:80px;width:0;height:14px;border-left:1px dotted #333;"></div>
  <div class="a" style="left:692px;top:111px;width:0;height:63px;border-left:1px dotted #333;"></div>
  <div class="sc c" style="left:21px;top:63px;width:95px;font-weight:bold;font-size:10.500px;">E</div>
  <div class="sc c" style="left:21px;top:80px;width:95px;">Length</div>
  <div class="sc" style="left:23px;top:111px;">25' - 0&quot;</div>
  <div class="sc" style="left:23px;top:127px;">9' - 0&quot;</div>
  <div class="sc" style="left:23px;top:143px;">25' - 0&quot;</div>
  <div class="sc" style="left:23px;top:159px;">9' - 0&quot;</div>
  <div class="sc c" style="left:117px;top:63px;width:95px;font-weight:bold;font-size:10.500px;">F</div>
  <div class="sc c" style="left:117px;top:80px;width:95px;">Width</div>
  <div class="sc" style="left:119px;top:111px;">0' - 7 5/8&quot;</div>
  <div class="sc" style="left:119px;top:127px;">0' - 7 5/8&quot;</div>
  <div class="sc" style="left:119px;top:143px;">0' - 7 5/8&quot;</div>
  <div class="sc" style="left:119px;top:159px;">0' - 7 5/8&quot;</div>
  <div class="sc c" style="left:213px;top:63px;width:95px;font-weight:bold;font-size:10.500px;">G</div>
  <div class="sc c" style="left:213px;top:80px;width:95px;">Material: Name</div>
  <div class="sc" style="left:215px;top:111px;">Concrete Masonry</div>
  <div class="sc" style="left:215px;top:127px;">Concrete Masonry</div>
  <div class="sc" style="left:215px;top:143px;">Concrete Masonry</div>
  <div class="sc" style="left:215px;top:159px;">Concrete Masonry</div>
  <div class="sc c" style="left:309px;top:63px;width:95px;font-weight:bold;font-size:10.500px;">H</div>
  <div class="sc c" style="left:309px;top:80px;width:95px;">Volume</div>
  <div class="sc" style="left:311px;top:111px;">1327.08 CF</div>
  <div class="sc" style="left:311px;top:127px;">465.90 CF</div>
  <div class="sc" style="left:311px;top:143px;">1294.18 CF</div>
  <div class="sc" style="left:311px;top:159px;">433.01 CF</div>
  <div class="sc c" style="left:405px;top:63px;width:95px;font-weight:bold;font-size:10.500px;">I</div>
  <div class="sc c" style="left:405px;top:80px;width:95px;">Area</div>
  <div class="sc" style="left:407px;top:111px;">2075 SF</div>
  <div class="sc" style="left:407px;top:127px;">728 SF</div>
  <div class="sc" style="left:407px;top:143px;">2023 SF</div>
  <div class="sc" style="left:407px;top:159px;">677 SF</div>
  <div class="sc c" style="left:501px;top:63px;width:95px;font-weight:bold;font-size:10.500px;">J</div>
  <div class="sc c" style="left:501px;top:80px;width:95px;">Material: Cost</div>
  <div class="sc" style="left:503px;top:111px;">19.63</div>
  <div class="sc" style="left:503px;top:127px;">19.63</div>
  <div class="sc" style="left:503px;top:143px;">19.63</div>
  <div class="sc" style="left:503px;top:159px;">19.63</div>
  <div class="sc c" style="left:597px;top:63px;width:95px;font-weight:bold;font-size:10.500px;">K</div>
  <div class="sc c" style="left:597px;top:80px;width:95px;">Total</div>
  <div class="sc" style="left:599px;top:111px;">40722.93</div>
  <div class="sc" style="left:599px;top:127px;">14296.88</div>
  <div class="sc" style="left:599px;top:143px;">39713.54</div>
  <div class="sc" style="left:599px;top:159px;">13287.49</div>
  <div class="sc c" style="left:1px;top:32px;width:328px;font-size:15.500px;line-height:20px;">&lt;Walls&gt;</div>
  <!-- K header selection -->
  <div class="a" style="left:596px;top:62px;width:96px;height:17px;border:1px dotted #000;box-sizing:border-box;background:#f0f0f0;"></div>
  <div class="sc c" style="left:597px;top:63px;width:95px;font-weight:bold;font-size:10.500px;">K</div>

  <!-- h scrollbar -->
  <div class="a" style="left:1px;top:489px;width:692px;height:16px;background:#f0f0f0;"></div>
  <div class="a" style="left:245px;top:489px;width:431px;height:15px;background:#cdcdcd;"></div>
  <svg class="a" style="left:5px;top:492px;" width="8" height="10"><path d="M6 1.500l-3.500 3.500l3.500 3.500" stroke="#444" fill="none" stroke-width="2.100"/></svg>
  <svg class="a" style="left:681px;top:492px;" width="8" height="10"><path d="M2 1.500l3.500 3.500l-3.500 3.500" stroke="#444" fill="none" stroke-width="2.100"/></svg>
</div>


<!-- ===== PROJECT BROWSER ===== -->
<div id="pb" class="a" style="left:962px;top:197px;width:402px;height:507px;background:#eeeeee;"></div>
<div class="t" style="left:966px;top:200px;color:#1e1e1e;">Project Browser - test 1</div>
<div class="a" style="left:964px;top:217px;width:400px;height:485px;background:#fff;"></div>
<div id="tree" class="a" style="left:0;top:0;width:0;height:0;">
<div class="a" style="left:972px;top:233px;width:0;height:337px;border-left:1px dotted #a2a2a2;"></div>
<div class="a" style="left:992px;top:233px;width:0;height:134px;border-left:1px dotted #a2a2a2;"></div>
<div class="a" style="left:1012px;top:250px;width:0;height:50px;border-left:1px dotted #a2a2a2;"></div>
<div class="a" style="left:1012px;top:322px;width:0;height:32px;border-left:1px dotted #a2a2a2;"></div>
<div class="a" style="left:1012px;top:376px;width:0;height:68px;border-left:1px dotted #a2a2a2;"></div>
<div class="a" style="left:992px;top:485px;width:0;height:13px;border-left:1px dotted #a2a2a2;"></div>
<svg class="a" style="left:968px;top:222px;" width="9" height="9" viewBox="0 0 9 9"><rect x="0.500" y="0.500" width="8" height="8" rx="1" fill="#f4f4f4" stroke="#9a9a9a"/><path d="M2.500 4.500h4" stroke="#3a55a8"/></svg>
<div class="a" style="left:977px;top:227px;width:7px;height:0;border-top:1px dotted #a2a2a2;"></div>
<svg class="a" style="left:985px;top:219px;" width="15" height="15" viewBox="0 0 15 15"><path d="M3.500 1.500h-2v3M11.500 1.500h2v3M1.500 10.500v3h2M13.500 10.500v3h-2" fill="none" stroke="#222"/><path d="M4.500 5.500l1.500 -1.500h5v5l-1.500 1.500h-5z" fill="#dfe3ea" stroke="#333"/></svg>
<div class="tr" style="left:1006px;top:217px;">Views (all)</div>
<div class="a" style="left:997px;top:245px;width:10px;height:0;border-top:1px dotted #a2a2a2;"></div>
<svg class="a" style="left:988px;top:240px;" width="9" height="9" viewBox="0 0 9 9"><rect x="0.500" y="0.500" width="8" height="8" rx="1" fill="#f4f4f4" stroke="#9a9a9a"/><path d="M2.500 4.500h4" stroke="#3a55a8"/></svg>
<div class="tr" style="left:1010px;top:235px;">Floor Plans</div>
<div class="a" style="left:1013px;top:263px;width:14px;height:0;border-top:1px dotted #a2a2a2;"></div>
<div class="tr" style="left:1030px;top:253px;">Level 1</div>
<div class="a" style="left:1013px;top:281px;width:14px;height:0;border-top:1px dotted #a2a2a2;"></div>
<div class="tr" style="left:1030px;top:271px;">Level 2</div>
<div class="a" style="left:1013px;top:299px;width:14px;height:0;border-top:1px dotted #a2a2a2;"></div>
<div class="tr" style="left:1030px;top:289px;">Site</div>
<div class="a" style="left:997px;top:317px;width:10px;height:0;border-top:1px dotted #a2a2a2;"></div>
<svg class="a" style="left:988px;top:312px;" width="9" height="9" viewBox="0 0 9 9"><rect x="0.500" y="0.500" width="8" height="8" rx="1" fill="#f4f4f4" stroke="#9a9a9a"/><path d="M2.500 4.500h4" stroke="#3a55a8"/></svg>
<div class="tr" style="left:1010px;top:307px;">Ceiling Plans</div>
<div class="a" style="left:1013px;top:335px;width:14px;height:0;border-top:1px dotted #a2a2a2;"></div>
<div class="tr" style="left:1030px;top:325px;">Level 1</div>
<div class="a" style="left:1013px;top:353px;width:14px;height:0;border-top:1px dotted #a2a2a2;"></div>
<div class="tr" style="left:1030px;top:343px;">Level 2</div>
<div class="a" style="left:997px;top:371px;width:10px;height:0;border-top:1px dotted #a2a2a2;"></div>
<svg class="a" style="left:988px;top:366px;" width="9" height="9" viewBox="0 0 9 9"><rect x="0.500" y="0.500" width="8" height="8" rx="1" fill="#f4f4f4" stroke="#9a9a9a"/><path d="M2.500 4.500h4" stroke="#3a55a8"/></svg>
<div class="tr" style="left:1010px;top:361px;">Elevations (Building Elevation)</div>
<div class="a" style="left:1013px;top:389px;width:14px;height:0;border-top:1px dotted #a2a2a2;"></div>
<div class="tr" style="left:1030px;top:379px;">East</div>
<div class="a" style="left:1013px;top:407px;width:14px;height:0;border-top:1px dotted #a2a2a2;"></div>
<div class="tr" style="left:1030px;top:397px;">North</div>
<div class="a" style="left:1013px;top:425px;width:14px;height:0;border-top:1px dotted #a2a2a2;"></div>
<div class="tr" style="left:1030px;top:415px;">South</div>
<div class="a" style="left:1013px;top:443px;width:14px;height:0;border-top:1px dotted #a2a2a2;"></div>
<div class="tr" style="left:1030px;top:433px;">West</div>
<div class="a" style="left:973px;top:461px;width:11px;height:0;border-top:1px dotted #a2a2a2;"></div>
<svg class="a" style="left:984px;top:453px;" width="17" height="16" viewBox="0 0 17 16"><rect x="0.500" y="0.500" width="15" height="14" rx="1" fill="#f2f2f2" stroke="#333"/><rect x="1" y="1" width="14" height="3" fill="#6a6a6a"/><rect x="3" y="6" width="3" height="3" fill="#555"/><circle cx="4.500" cy="12" r="1.500" fill="#555"/><path d="M8 6.500h3M12 6.500h2M8 8.500h6M8 11.500h2M11 11.500h3" stroke="#444"/></svg>
<div class="tr" style="left:1006px;top:451px;">Legends</div>
<svg class="a" style="left:968px;top:474px;" width="9" height="9" viewBox="0 0 9 9"><rect x="0.500" y="0.500" width="8" height="8" rx="1" fill="#f4f4f4" stroke="#9a9a9a"/><path d="M2.500 4.500h4" stroke="#3a55a8"/></svg>
<div class="a" style="left:977px;top:479px;width:7px;height:0;border-top:1px dotted #a2a2a2;"></div>
<svg class="a" style="left:984px;top:471px;" width="17" height="16" viewBox="0 0 17 16"><rect x="0.500" y="1.500" width="14" height="11" fill="#fff" stroke="#3a3a3a"/><rect x="1" y="2" width="13" height="2.500" fill="#7a7a7a"/><path d="M1 7.500h13M1 10.500h13M5.500 4.500v8" stroke="#8a8a8a"/></svg>
<div class="tr" style="left:1006px;top:469px;">Schedules/Quantities (all)</div>
<div class="a" style="left:993px;top:497px;width:13px;height:0;border-top:1px dotted #a2a2a2;"></div>
<div class="a" style="left:1007px;top:487px;width:35px;height:18px;background:#e3e3e3;"></div>
<div class="tr" style="left:1010px;top:487px;font-weight:bold;">Walls</div>
<div class="a" style="left:973px;top:515px;width:11px;height:0;border-top:1px dotted #a2a2a2;"></div>
<svg class="a" style="left:984px;top:507px;" width="17" height="16" viewBox="0 0 17 16"><path d="M0.500 1.500h11l4 4v8h-15z" fill="#f4f4f4" stroke="#333"/><path d="M11.500 1.500v4h4" fill="none" stroke="#333"/><path d="M2.500 11.500v-6h6v6M2.500 8.500h3v3M11.500 8v4" fill="none" stroke="#555"/></svg>
<div class="tr" style="left:1006px;top:505px;">Sheets (all)</div>
<svg class="a" style="left:968px;top:528px;" width="9" height="9" viewBox="0 0 9 9"><rect x="0.500" y="0.500" width="8" height="8" rx="1" fill="#f4f4f4" stroke="#9a9a9a"/><path d="M2.500 4.500h4" stroke="#3a55a8"/><path d="M4.500 2.500v4" stroke="#3a55a8"/></svg>
<div class="a" style="left:977px;top:533px;width:7px;height:0;border-top:1px dotted #a2a2a2;"></div>
<svg class="a" style="left:985px;top:525px;" width="15" height="16" viewBox="0 0 15 16"><rect x="1.500" y="1.500" width="6" height="6" fill="#f2f2f2" stroke="#333"/><path d="M9.500 1.500h4v12h-12v-4h8z" fill="#f2f2f2" stroke="#333"/><path d="M2 14.500h12" stroke="#999"/></svg>
<div class="tr" style="left:1006px;top:523px;">Families</div>
<svg class="a" style="left:968px;top:546px;" width="9" height="9" viewBox="0 0 9 9"><rect x="0.500" y="0.500" width="8" height="8" rx="1" fill="#f4f4f4" stroke="#9a9a9a"/><path d="M2.500 4.500h4" stroke="#3a55a8"/><path d="M4.500 2.500v4" stroke="#3a55a8"/></svg>
<div class="a" style="left:977px;top:551px;width:7px;height:0;border-top:1px dotted #a2a2a2;"></div>
<svg class="a" style="left:985px;top:543px;" width="15" height="16" viewBox="0 0 15 16"><path d="M3 1.500h-2v13h2M12 1.500h2v13h-2" fill="none" stroke="#222"/><circle cx="6.500" cy="6.500" r="3.500" fill="#e2e2e2" stroke="#444"/><rect x="6.500" y="6.500" width="5" height="5" rx="1" fill="#d6d6d6" stroke="#444"/></svg>
<div class="tr" style="left:1006px;top:541px;">Groups</div>
<div class="a" style="left:973px;top:569px;width:11px;height:0;border-top:1px dotted #a2a2a2;"></div>
<svg class="a" style="left:984px;top:561px;" width="17" height="16" viewBox="0 0 17 16"><rect x="1.200" y="5.700" width="7.600" height="4.600" rx="2.300" fill="none" stroke="#6e5200" stroke-width="2.400"/><rect x="7.200" y="5.700" width="7.600" height="4.600" rx="2.300" fill="none" stroke="#6e5200" stroke-width="2.400"/><rect x="1.200" y="5.700" width="7.600" height="4.600" rx="2.300" fill="none" stroke="#f0b400" stroke-width="1.300"/><rect x="7.200" y="5.700" width="7.600" height="4.600" rx="2.300" fill="none" stroke="#f0b400" stroke-width="1.300"/></svg>
<div class="tr" style="left:1006px;top:559px;">Revit Links</div>
</div>


<!-- ===== DIALOG ===== -->
<div id="dlg" class="a" style="left:532px;top:234px;width:303px;height:253px;background:#f0f0f0;box-shadow:0 0 0 1px rgba(110,110,110,0.300),0 4px 14px 3px rgba(0,0,0,0.330);">
  <div class="a" style="left:0;top:0;width:303px;height:30px;background:#ffffff;"></div>
  <svg class="a" style="left:8px;top:8px;" width="16" height="14" viewBox="0 0 16 14">
    <rect x="0.500" y="0.500" width="15" height="12" fill="#f4f4f4" stroke="#b9b9b9"/>
    <rect x="2" y="2" width="7" height="9" fill="#3f8f7a"/>
    <rect x="2" y="2" width="7" height="3" fill="#3b6fa8"/>
    <rect x="10" y="2" width="2" height="9" fill="#c8d4d0"/>
    <rect x="13" y="2" width="1.500" height="4" fill="#8fb8a8"/>
  </svg>
  <div class="t" style="left:29px;top:7px;font-size:12px;color:#000;letter-spacing:-0.170px;">Calculated Value</div>
  <svg class="a" style="left:282px;top:9px;" width="12" height="12"><path d="M0.700 0.700l10.600 10.600M11.300 0.700l-10.600 10.600" stroke="#111" stroke-width="1.100"/></svg>

  <div class="dl" style="left:10px;top:45px;">Name:</div>
  <div class="a" style="left:92px;top:41px;width:201px;height:20px;background:#fff;border:1px solid #0078d7;box-sizing:border-box;"></div>
  <div class="a" style="left:98px;top:43px;width:1px;height:13px;background:#000;"></div>

  <svg class="a" style="left:46px;top:77px;" width="14" height="14"><circle cx="7" cy="7" r="6" fill="#fff" stroke="#333" stroke-width="1"/><circle cx="7" cy="7" r="3.300" fill="#222"/></svg>
  <div class="dl" style="left:62px;top:77px;">Formula</div>
  <svg class="a" style="left:175px;top:77px;" width="14" height="14"><circle cx="7" cy="7" r="6" fill="#fff" stroke="#333" stroke-width="1"/></svg>
  <div class="dl" style="left:191px;top:77px;">Percentage</div>

  <div class="dl" style="left:10px;top:106px;">Discipline:</div>
  <div class="a" style="left:92px;top:102px;width:201px;height:21px;background:#e1e1e1;border:1px solid #adadad;box-sizing:border-box;"></div>
  <div class="dl" style="left:96px;top:106px;">Common</div>
  <svg class="a" style="left:278px;top:109px;" width="10" height="7"><path d="M0.500 1l4.500 4.500l4.500 -4.500" stroke="#3c3c3c" fill="none" stroke-width="1.100"/></svg>

  <div class="dl" style="left:10px;top:144px;">Type:</div>
  <div class="a" style="left:92px;top:137px;width:201px;height:21px;background:#e1e1e1;border:1px solid #adadad;box-sizing:border-box;"></div>
  <div class="dl" style="left:96px;top:141px;">Number</div>
  <svg class="a" style="left:278px;top:144px;" width="10" height="7"><path d="M0.500 1l4.500 4.500l4.500 -4.500" stroke="#3c3c3c" fill="none" stroke-width="1.100"/></svg>

  <div class="dl" style="left:10px;top:183px;">Formula:</div>
  <div class="a" style="left:92px;top:176px;width:170px;height:20px;background:#fff;border:1px solid #3a3a3a;box-sizing:border-box;"></div>
  <div class="a" style="left:270px;top:177px;width:22px;height:18px;background:#e1e1e1;border:1px solid #adadad;box-sizing:border-box;"></div>
  <div class="dl c" style="left:270px;top:177px;width:22px;font-size:13px;letter-spacing:0.600px;text-indent:1px;">...</div>

  <div class="a" style="left:12px;top:220px;width:88px;height:21px;background:#cccccc;border:1px solid #bfbfbf;box-sizing:border-box;"></div>
  <div class="dl c" style="left:12px;top:224px;width:88px;color:#838383;">OK</div>
  <div class="a" style="left:108px;top:220px;width:88px;height:21px;background:#e1e1e1;border:1px solid #adadad;box-sizing:border-box;"></div>
  <div class="dl c" style="left:108px;top:224px;width:88px;">Cancel</div>
  <div class="a" style="left:204px;top:220px;width:88px;height:21px;background:#e5f1fb;border:1px solid #0078d7;box-sizing:border-box;"></div>
  <div class="dl c" style="left:204px;top:224px;width:88px;">Help</div>
  <svg class="a" style="left:292px;top:242px;" width="10" height="10"><path d="M7 1h2v2h-2zM4 4h2v2h-2zM7 4h2v2h-2zM1 7h2v2h-2zM4 7h2v2h-2zM7 7h2v2h-2z" fill="#bdbdbd"/></svg>
</div>

<!-- ===== RED ANNOTATIONS ===== -->
<svg class="a" style="left:0;top:0;pointer-events:none;" width="1364" height="708" viewBox="0 0 1364 708">
  <ellipse cx="248.600" cy="82.700" rx="46" ry="48" fill="none" stroke="#ea1c24" stroke-width="5"/>
  <ellipse cx="589" cy="247.400" rx="69.300" ry="23.100" fill="none" stroke="#ea1c24" stroke-width="5"/>
</svg>

<!-- ===== STATUS STRIP ===== -->
<div class="a" style="left:0;top:704px;width:1364px;height:4px;background:#cbcbcb;"></div>

</body>
</html>
